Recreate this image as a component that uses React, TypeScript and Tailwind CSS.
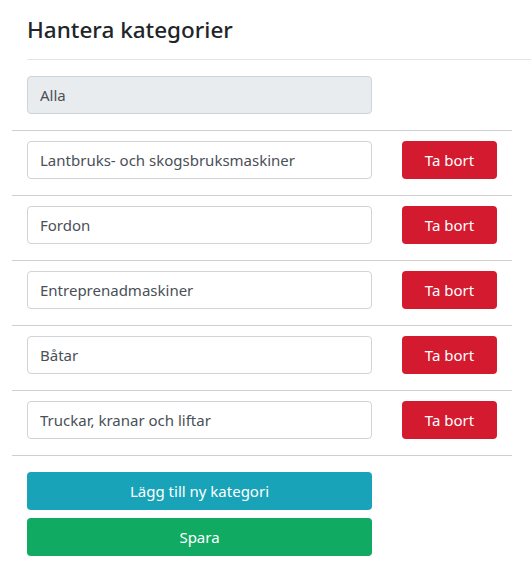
import React from 'react';

const categories = [
  'Lantbruks- och skogsbruksmaskiner',
  'Fordon',
  'Entreprenadmaskiner',
  'Båtar',
  'Truckar, kranar och liftar',
];

export default function App() {
  return (
    <div
      className="w-[531px] min-h-[577px] bg-white text-[#212529]"
      style={{ fontFamily: '"Noto Sans", "Open Sans", sans-serif' }}
    >
      <div className="ml-[27px] h-[60px] pt-[14px] border-b border-[#e3e6e9]">
        <h1 className="text-[22.5px] leading-[32px] font-medium">Hantera kategorier</h1>
      </div>

      <div className="ml-[12px] w-[500px]">
        <div className="px-[15px] pt-[16px] pb-[16px] border-b border-[#cfcfcf]">
          <input
            readOnly
            value="Alla"
            className="block w-[345px] h-[38px] px-[12px] rounded-[4px] border border-[#ced4da] bg-[#e9ecef] text-[15px] text-[#495057] outline-none"
          />
        </div>

        {categories.map((c) => (
          <div
            key={c}
            className="flex items-center px-[15px] pt-[10px] pb-[16px] border-b border-[#cfcfcf]"
          >
            <input
              readOnly
              value={c}
              className="block w-[345px] h-[38px] px-[12px] rounded-[4px] border border-[#ced4da] bg-white text-[15px] text-[#495057] outline-none"
            />
            <button className="ml-[30px] w-[95px] h-[38px] rounded-[4px] bg-[#d31a2e] text-white text-[15px]">
              Ta bort
            </button>
          </div>
        ))}

        <div className="px-[15px] pt-[16px] flex flex-col gap-[8px]">
          <button className="w-[345px] h-[38px] rounded-[4px] bg-[#18a3b9] text-white text-[15px]">
            Lägg till ny kategori
          </button>
          <button className="w-[345px] h-[38px] rounded-[4px] bg-[#10aa63] text-white text-[15px]">
            Spara
          </button>
        </div>
      </div>
    </div>
  );
}
